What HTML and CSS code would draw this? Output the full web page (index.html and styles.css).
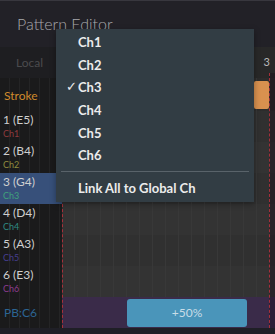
FILE: index.html
```html
<!DOCTYPE html>
<html lang="en">
<head>
  <meta charset="UTF-8">
  <title>Pattern Editor</title>
  <link rel="stylesheet" href="styles.css">
</head>
<body>
  <div id="app">
    <div id="titleBar">Pattern Editor</div>

    <div id="editor">
      <!-- stroke labels -->
      <div id="labels">
        <div class="tab">Local</div>
        <div class="lane strokeLane"><span class="strokeName">Stroke</span></div>
        <div class="lane"><span class="note">1 (E5)</span><span class="ch ch1">Ch1</span></div>
        <div class="lane"><span class="note">2 (B4)</span><span class="ch ch2">Ch2</span></div>
        <div class="lane selected"><span class="note">3 (G4)</span><span class="ch ch3">Ch3</span></div>
        <div class="lane"><span class="note">4 (D4)</span><span class="ch ch4">Ch4</span></div>
        <div class="lane"><span class="note">5 (A3)</span><span class="ch ch5">Ch5</span></div>
        <div class="lane"><span class="note">6 (E3)</span><span class="ch ch6">Ch6</span></div>
        <div class="lane pbLane"><span class="pbName">PB:C6</span></div>
      </div>

      <!-- grid -->
      <div id="grid">
        <div class="gridHead"><span class="beat">3</span></div>
        <div class="gridRow strokeRow"><div class="strokeBlock"></div></div>
        <div class="gridRow"></div>
        <div class="gridRow alt"></div>
        <div class="gridRow"></div>
        <div class="gridRow alt"></div>
        <div class="gridRow"></div>
        <div class="gridRow alt"></div>
        <div class="gridRow pbRow"><div class="pbButton">+50%</div></div>
        <div class="playhead"></div>
        <div class="startLine"></div>
      </div>
    </div>

    <div id="footer"></div>
  </div>

  <!-- channel popup -->
  <div id="chMenu">
    <div class="menuItem">Ch1</div>
    <div class="menuItem">Ch2</div>
    <div class="menuItem checked">Ch3</div>
    <div class="menuItem">Ch4</div>
    <div class="menuItem">Ch5</div>
    <div class="menuItem">Ch6</div>
    <div class="menuSep"></div>
    <div class="menuItem">Link All to Global Ch</div>
  </div>
</body>
</html>
```
FILE: styles.css
```css
/* base */
body {
  margin: 0;
  padding: 0;
  width: 275px;
  height: 334px;
  overflow: hidden;
  background-color: #1f1f25;
  font-family: Lato, "Open Sans", sans-serif;
  position: relative;
}
#app {
  display: flex;
  flex-direction: column;
  height: 334px;
}
/* title */
#titleBar {
  height: 45px;
  border-top: 1px solid #38373e;
  background-color: #222127;
  color: #a9a9ad;
  font-size: 16px;
  font-weight: 300;
  padding-left: 17px;
  line-height: 45px;
  box-sizing: border-box;
  height: 47px;
  padding-top: 0;
}
/* editor */
#editor {
  display: flex;
  height: 281px;
}
#labels {
  width: 62px;
  background-color: #1a1a1b;
  background-image: repeating-linear-gradient(90deg, transparent 0, transparent 9px, #242425 9px, #242425 10px);
  display: flex;
  flex-direction: column;
}
.tab {
  height: 31px;
  line-height: 31px;
  background-color: #1e1e21;
  color: #4b4b4d;
  font-size: 12px;
  padding-left: 16px;
}
.lane {
  height: 31px;
  display: flex;
  flex-direction: column;
  padding-left: 3px;
  box-sizing: border-box;
  padding-top: 2px;
}
.strokeLane {
  height: 33px;
  justify-content: center;
  padding-top: 2px;
  padding-left: 4px;
}
.strokeName {
  color: #cf8a2c;
  font-size: 12px;
}
.lane.selected {
  background-color: #37507a;
}
.note {
  color: #cfcfcf;
  font-size: 12px;
  line-height: 14px;
}
.ch {
  font-size: 9px;
  line-height: 13px;
}
.ch1 { color: #8e3b3e; }
.ch2 { color: #8f8c3e; }
.ch3 { color: #3fa27a; }
.ch4 { color: #2f8a82; }
.ch5 { color: #463f90; }
.ch6 { color: #8b3c8f; }
.pbLane {
  justify-content: center;
  padding-top: 0;
  padding-left: 4px;
}
.pbName {
  color: #2c6594;
  font-size: 12px;
}
/* grid */
#grid {
  flex: 1;
  position: relative;
  display: flex;
  flex-direction: column;
}
.gridHead {
  height: 31px;
  background-color: #282828;
  display: flex;
  justify-content: flex-end;
  align-items: center;
  padding-right: 5px;
  padding-bottom: 2px;
  box-sizing: border-box;
}
.beat {
  color: #b9b9b9;
  font-size: 11px;
}
.gridRow {
  height: 31px;
  background-color: #303030;
  background-image: repeating-linear-gradient(90deg, transparent 0, transparent 12px, #383838 12px, #383838 13px);
  display: flex;
}
.gridRow.alt {
  background-color: #333333;
}
.strokeRow {
  height: 33px;
  background-color: #2c2c2c;
  justify-content: flex-end;
  align-items: center;
}
.strokeBlock {
  width: 15px;
  height: 28px;
  margin-right: 6px;
  background-color: #d9914f;
  border-radius: 2px;
}
.pbRow {
  background-color: #3a2b49;
  background-image: none;
  align-items: center;
}
.pbButton {
  margin-left: 65px;
  width: 120px;
  height: 28px;
  line-height: 28px;
  text-align: center;
  background-color: #4a95ba;
  border-radius: 3px;
  color: #c9dde8;
  font-size: 12px;
}
.startLine {
  position: absolute;
  left: 0;
  top: 31px;
  bottom: 0;
  border-left: 1px dashed #a6303a;
}
.playhead {
  position: absolute;
  left: 207px;
  top: 26px;
  bottom: 0;
  width: 6px;
  border-left: 1px dashed #a6303a;
  background-color: rgba(20, 10, 20, 0.35);
}
#footer {
  flex: 1;
  background-color: #1f1f26;
}
/* popup menu */
#chMenu {
  position: absolute;
  left: 56px;
  top: 29px;
  width: 198px;
  height: 173px;
  box-sizing: border-box;
  padding-top: 2px;
  background-color: #323d44;
  box-shadow: 0 2px 6px rgba(0,0,0,0.35);
}
.menuItem {
  position: relative;
  height: 22.7px;
  line-height: 22.7px;
  padding-left: 22px;
  color: #ececec;
  font-size: 13px;
  font-weight: bold;
}
.menuItem.checked::before {
  content: "\2713";
  position: absolute;
  left: 10px;
  font-family: "DejaVu Sans", sans-serif;
  font-weight: normal;
}
.menuSep {
  height: 1px;
  margin: 4px 5px 5px 5px;
  background-color: #59636a;
}
```
